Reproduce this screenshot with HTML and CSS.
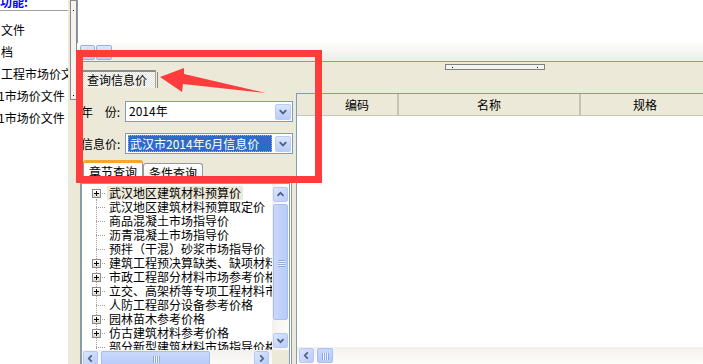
FILE: index.html
```html
<!DOCTYPE html>
<html>
<head>
   <meta http-equiv="Content-Type" content="text/html; charset=UTF-8" />
   <link rel="stylesheet" href="styles.css">
</head>
<body>

<div class="app">
    <div class="nav">
        <div class="nav-head">功能:</div>
        <ul class="nav-list">
            <li>文件</li>
            <li>档</li>
            <li>工程市场价文件</li>
            <li class="cut">1市场价文件</li>
            <li class="cut">1市场价文件</li>
        </ul>
    </div>
    <div class="vsplit"><div class="vgrip"></div></div>

    <div class="work">
        <div class="top-pane"></div>
        <div class="toolbar">
            <span class="tb-btn">+</span>
            <span class="tb-btn wide">···</span>
        </div>
        <div class="hsplit"><div class="hgrip"></div></div>
        <div class="tabbar">
            <div class="tab">查询信息价</div>
            <div class="tab-sep"></div>
        </div>

        <div class="content">
            <div class="query">
                <div class="field">
                    <label class="lbl-year"><span>年</span><span>份:</span></label>
                    <div class="combo">
                        <span class="combo-text">2014年</span>
                        <span class="combo-btn"><svg width="15" height="15" viewBox="0 0 15 15"><path d="M4 6 L7.5 9.5 L11 6" fill="none" stroke="#4d6185" stroke-width="2"/></svg></span>
                    </div>
                </div>
                <div class="field second">
                    <label>信息价:</label>
                    <div class="combo">
                        <span class="combo-text focus">武汉市2014年6月信息价</span>
                        <span class="combo-btn"><svg width="15" height="15" viewBox="0 0 15 15"><path d="M4 6 L7.5 9.5 L11 6" fill="none" stroke="#4d6185" stroke-width="2"/></svg></span>
                    </div>
                </div>

                <div class="subtabs">
                    <div class="subtab active">章节查询</div>
                    <div class="subtab">条件查询</div>
                </div>

                <div class="pane">
                    <div class="tree">
                        <ul class="tree-list">
                            <li class="node first"><span class="tw"><i class="plus"></i></span><span class="lbl sel">武汉地区建筑材料预算价</span></li>
                            <li class="node"><span class="tw"></span><span class="lbl">武汉地区建筑材料预算取定价</span></li>
                            <li class="node"><span class="tw"></span><span class="lbl">商品混凝土市场指导价</span></li>
                            <li class="node"><span class="tw"></span><span class="lbl">沥青混凝土市场指导价</span></li>
                            <li class="node"><span class="tw"></span><span class="lbl">预拌（干混）砂浆市场指导价</span></li>
                            <li class="node"><span class="tw"><i class="plus"></i></span><span class="lbl">建筑工程预决算缺类、缺项材料价格</span></li>
                            <li class="node"><span class="tw"><i class="plus"></i></span><span class="lbl">市政工程部分材料市场参考价格</span></li>
                            <li class="node"><span class="tw"><i class="plus"></i></span><span class="lbl">立交、高架桥等专项工程材料市场价</span></li>
                            <li class="node"><span class="tw"></span><span class="lbl">人防工程部分设备参考价格</span></li>
                            <li class="node"><span class="tw"><i class="plus"></i></span><span class="lbl">园林苗木参考价格</span></li>
                            <li class="node"><span class="tw"><i class="plus"></i></span><span class="lbl">仿古建筑材料参考价格</span></li>
                            <li class="node"><span class="tw"></span><span class="lbl">部分新型建筑材料市场指导价格</span></li>
                        </ul>
                        <div class="vscroll">
                            <span class="sb-btn"><svg width="15" height="15" viewBox="0 0 15 15"><path d="M4 9 L7.5 5.5 L11 9" fill="none" stroke="#4d6185" stroke-width="2"/></svg></span>
                            <span class="sb-thumb v"></span>
                            <span class="sb-btn end"><svg width="15" height="15" viewBox="0 0 15 15"><path d="M4 6 L7.5 9.5 L11 6" fill="none" stroke="#4d6185" stroke-width="2"/></svg></span>
                        </div>
                        <div class="hscroll">
                            <span class="sb-btn"><svg width="15" height="15" viewBox="0 0 15 15"><path d="M9 4 L5.5 7.5 L9 11" fill="none" stroke="#4d6185" stroke-width="2"/></svg></span>
                            <span class="sb-thumb h"></span>
                            <span class="sb-btn end"><svg width="15" height="15" viewBox="0 0 15 15"><path d="M6 4 L9.5 7.5 L6 11" fill="none" stroke="#4d6185" stroke-width="2"/></svg></span>
                        </div>
                        <div class="corner"></div>
                    </div>
                </div>
            </div>

            <div class="grid">
                <div class="grid-head">
                    <div class="gh-pad"></div>
                    <div class="gh">编码</div>
                    <div class="gh">名称</div>
                    <div class="gh">规格</div>
                </div>
                <div class="grid-body"></div>
                <div class="grid-scroll">
                    <span class="sb-btn"><svg width="15" height="15" viewBox="0 0 15 15"><path d="M9 4 L5.5 7.5 L9 11" fill="none" stroke="#4d6185" stroke-width="2"/></svg></span>
                    <span class="sb-thumb h small"></span>
                </div>
            </div>
        </div>
    </div>
</div>

<div class="mark-box"></div>
<svg class="mark-arrow" width="703" height="364" viewBox="0 0 703 364">
    <polygon points="160,77 184,68 184,74 266,93 183,84 182,92" fill="#ff3c3c"/>
</svg>

</body>
</html>
```

FILE: styles.css
```css
* {
    padding: 0; margin: 0;
    box-sizing: border-box;
}
body {
    width: 703px;
    height: 364px;
    overflow: hidden;
    font-family: "Noto Sans CJK SC", "DejaVu Sans", sans-serif;
    font-size: 12px;
    color: #000;
    background: #ece9d8;
}
ul { list-style: none; }

.app {
    display: flex;
    height: 364px;
}

/* left function list */
.nav {
    width: 68px;
    background: #fff;
    overflow: hidden;
    white-space: nowrap;
}
.nav-head {
    height: 16px;
    margin-top: -5px;
    line-height: 14px;
    color: #0000ff;
    font-weight: bold;
    border-bottom: 1px solid #a0a0a0;
}
.nav-list {
    padding-top: 8px;
    padding-left: 1px;
}
.nav-list li {
    height: 22px;
    line-height: 22px;
}
.nav-list li.cut {
    margin-left: -3px;
}

.vsplit {
    width: 9px;
    background: #ece9d8;
}
.vgrip {
    width: 7px;
    height: 100px;
    margin-left: 2px;
    border: 1px solid #8a8a8a;
    background:
        linear-gradient(#000, #000) 2px 9px / 1px 1px no-repeat,
        linear-gradient(#000, #000) 2px 94px / 1px 1px no-repeat,
        #f4f3ee;
}

/* main work area */
.work {
    flex: 1;
    display: flex;
    flex-direction: column;
    min-width: 0;
}
.top-pane {
    height: 43px;
    background: #fff;
    border-left: 1px solid #7f9db9;
}
.toolbar {
    height: 19px;
    display: flex;
    gap: 1px;
    padding: 2px 0 0 3px;
    background: linear-gradient(#fdfdfc, #eeede7);
    border-bottom: 1px solid #7f9db9;
}
.tb-btn {
    width: 15px;
    height: 15px;
    border: 1px solid #98b0de;
    border-radius: 2px;
    background: linear-gradient(#dce6fa, #bccdf2);
    color: #2b3f6b;
    font-size: 10px;
    line-height: 12px;
    text-align: center;
}
.tb-btn.wide { width: 16px; }

.hsplit { height: 8px; }
.hgrip {
    width: 100px;
    height: 6px;
    margin: 2px 0 0 368px;
    border: 1px solid #808080;
    background:
        linear-gradient(#000, #000) 6px 2px / 1px 1px no-repeat,
        linear-gradient(#000, #000) 91px 2px / 1px 1px no-repeat,
        #f4f3ee;
}

.tabbar {
    height: 18px;
    display: flex;
    align-items: flex-start;
    padding-left: 5px;
}
.tab {
    width: 74px;
    height: 18px;
    line-height: 15px;
    padding-left: 4px;
    border-top: 2px solid #8c8c8c;
    border-left: 1px solid #fff;
    border-right: 1px solid #a6a6a6;
    background: repeating-conic-gradient(#ffffff 0 25%, #e3e1d5 0 50%) 0 0 / 2px 2px;
}
.tab-sep {
    width: 1px;
    height: 16px;
    margin: 2px 0 0 1px;
    background: #8c8c8c;
}

.content {
    flex: 1;
    display: flex;
    min-height: 0;
}

/* query panel */
.query {
    width: 216px;
    padding: 13px 0 0 4px;
    display: flex;
    flex-direction: column;
}
.field {
    display: flex;
    align-items: center;
    gap: 4px;
    height: 21px;
}
.field.second { margin-top: 11px; }
.field label {
    width: 40px;
    line-height: 14px;
    white-space: nowrap;
}
.field label.lbl-year {
    display: flex;
    justify-content: space-between;
    padding-right: 1px;
}
.combo {
    width: 168px;
    height: 21px;
    display: flex;
    align-items: center;
    padding: 0 1px 0 2px;
    border: 1px solid #7f9db9;
    background: #fff;
}
.combo-text {
    flex: 1;
    height: 17px;
    line-height: 15px;
    padding-left: 1px;
    white-space: nowrap;
}
.combo-text.focus {
    margin-right: 3px;
    color: #fff;
    background: #316ac5;
    border: 1px dotted #e8b000;
}
.combo-btn {
    width: 16px;
    height: 16px;
    border: 1px solid #b9cbf3;
    border-radius: 2px;
    background: linear-gradient(#dbe5fd, #b7cbf8);
    display: flex;
    align-items: center;
    justify-content: center;
}

.subtabs {
    margin-top: 6px;
    height: 22px;
    display: flex;
    align-items: flex-end;
    padding-left: 2px;
}
.subtab {
    height: 19px;
    line-height: 17px;
    padding: 0 5px;
    border: 1px solid #919b9c;
    border-bottom: none;
    border-radius: 3px 3px 0 0;
    background: linear-gradient(#fff, #ecebe5);
}
.subtab.active {
    height: 22px;
    line-height: 18px;
    border-top: 3px solid #f5a630;
    background: #fcfcfe;
}

.pane {
    flex: 1;
    margin-left: -1px;
    width: 212px;
    border: 1px solid #919b9c;
    border-bottom: none;
    background: #fcfcfe;
}

/* tree view */
.tree {
    display: grid;
    grid-template-columns: 1fr 17px;
    grid-template-rows: 166px 17px;
    width: 209px;
    border: 1px solid #7f9db9;
    border-bottom: none;
    background: #fff;
}
.tree-list {
    padding: 2px 0 0 10px;
    overflow: hidden;
    white-space: nowrap;
}
.node {
    display: flex;
    align-items: center;
    height: 14px;
}
.tw {
    width: 15px;
    height: 14px;
    flex: none;
    display: flex;
    align-items: center;
    background:
        repeating-linear-gradient(to bottom, #a0a0a0 0 1px, transparent 1px 2px) 4px 0 / 1px 100% no-repeat,
        repeating-linear-gradient(to right, #a0a0a0 0 1px, transparent 1px 2px) 4px 7px / 9px 1px no-repeat;
}
.node.first .tw {
    background:
        repeating-linear-gradient(to bottom, #a0a0a0 0 1px, transparent 1px 2px) 4px 7px / 1px 7px no-repeat,
        repeating-linear-gradient(to right, #a0a0a0 0 1px, transparent 1px 2px) 4px 7px / 9px 1px no-repeat;
}
.plus {
    width: 9px;
    height: 9px;
    border: 1px solid #8a8a8a;
    background:
        linear-gradient(#000, #000) 1px 3px / 5px 1px no-repeat,
        linear-gradient(#000, #000) 3px 1px / 1px 5px no-repeat,
        linear-gradient(#fff, #dcd9cb);
}
.lbl {
    height: 14px;
    line-height: 14px;
    padding: 0 2px;
}
.lbl.sel { background: #ece9d8; }

/* xp scrollbars */
.vscroll {
    display: flex;
    flex-direction: column;
    align-items: center;
    padding: 3px 0 2px;
    background: linear-gradient(to right, #f3f1ec, #fdfdfa);
}
.hscroll {
    display: flex;
    align-items: center;
    padding: 0 3px 0 1px;
    background: linear-gradient(#f3f1ec, #fdfdfa);
}
.corner { background: #ece9d8; }
.sb-btn {
    width: 15px;
    height: 15px;
    flex: none;
    border: 1px solid #b6c8f3;
    border-radius: 2px;
    background: linear-gradient(135deg, #dbe5fd, #b9ccf8);
    display: flex;
    align-items: center;
    justify-content: center;
}
.vscroll .sb-btn.end { margin-top: auto; }
.hscroll .sb-btn.end { margin-left: auto; }
.sb-thumb {
    border: 1px solid #a9bfef;
    border-radius: 2px;
}
.sb-thumb.v {
    width: 15px;
    height: 116px;
    margin-top: 2px;
    background:
        repeating-linear-gradient(to bottom, #8ea8e6 0 1px, #eef3fe 1px 2px) 4px 55px / 7px 7px no-repeat,
        linear-gradient(to right, #c9d8fc, #b8cbf8);
}
.sb-thumb.h {
    width: 109px;
    height: 15px;
    margin-left: 3px;
    background:
        repeating-linear-gradient(to right, #8ea8e6 0 1px, #eef3fe 1px 2px) 51px 4px / 7px 7px no-repeat,
        linear-gradient(#c9d8fc, #b8cbf8);
}
.sb-thumb.h.small {
    width: 16px;
    background:
        repeating-linear-gradient(to right, #8ea8e6 0 1px, #eef3fe 1px 2px) 4px 4px / 7px 7px no-repeat,
        linear-gradient(#c9d8fc, #b8cbf8);
}

/* result grid */
.grid {
    flex: 1;
    margin: 5px 0 0 3px;
    display: flex;
    flex-direction: column;
    border-left: 1px solid #7f9db9;
    border-top: 1px solid #7f9db9;
    background: #fff;
    overflow: hidden;
}
.grid-head {
    display: grid;
    grid-template-columns: 20px 82px 182px 128px;
    height: 22px;
    background: #ece9d8;
    border-bottom: 1px solid #c9c6b8;
}
.gh {
    line-height: 21px;
    text-align: center;
    border-right: 2px solid #c6c3b5;
}
.gh:last-child { border-right: none; }
.grid-body { height: 236px; }
.grid-scroll {
    height: 17px;
    display: flex;
    align-items: center;
    padding-left: 2px;
    background: linear-gradient(#f3f1ec, #fdfdfa);
}

/* annotation overlay */
.mark-box {
    position: absolute;
    left: 76px;
    top: 50px;
    width: 246px;
    height: 133px;
    border: 7px solid #ff3c3c;
}
.mark-arrow {
    position: absolute;
    left: 0;
    top: 0;
}
```
